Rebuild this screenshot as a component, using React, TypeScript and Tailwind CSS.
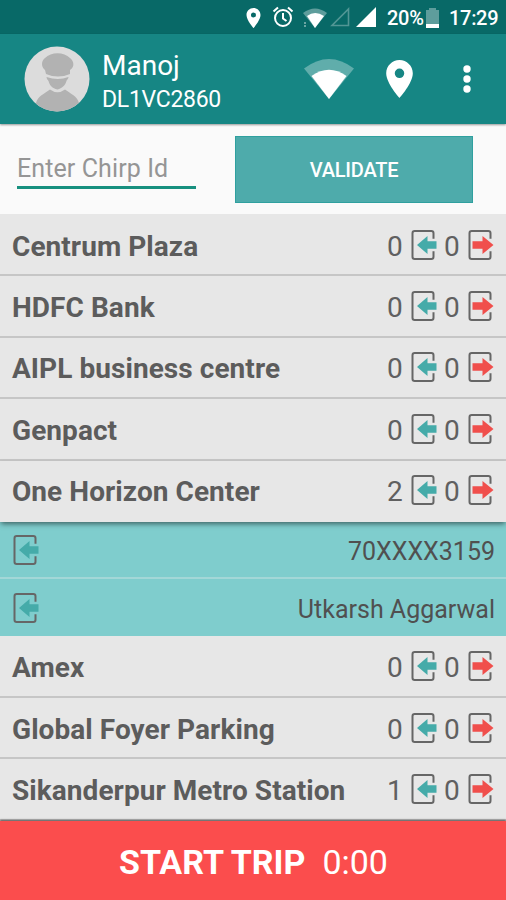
import React from "react";

type Stop = { name: string; boarding: number; leaving: number };

const stopsBefore: Stop[] = [
  { name: "Centrum Plaza", boarding: 0, leaving: 0 },
  { name: "HDFC Bank", boarding: 0, leaving: 0 },
  { name: "AIPL business centre", boarding: 0, leaving: 0 },
  { name: "Genpact", boarding: 0, leaving: 0 },
  { name: "One Horizon Center", boarding: 2, leaving: 0 },
];

const stopsAfter: Stop[] = [
  { name: "Amex", boarding: 0, leaving: 0 },
  { name: "Global Foyer Parking", boarding: 0, leaving: 0 },
  { name: "Sikanderpur Metro Station", boarding: 1, leaving: 0 },
];

const passengers = ["70XXXX3159", "Utkarsh Aggarwal"];

function DoorIcon({ out = false }: { out?: boolean }) {
  return (
    <svg width="26" height="30" viewBox="0 0 26 30" fill="none" className="shrink-0">
      <path
        d="M22.500 8.800V3.200Q22.500 1 20.300 1H3.700Q1.500 1 1.500 3.200V26.800Q1.500 29 3.700 29H20.300Q22.500 29 22.500 26.800V21.200"
        stroke="#666"
        strokeWidth="2"
      />
      {out ? (
        <path d="M4.500 11.200H14.500V6L25.500 15L14.500 24V18.800H4.500Z" fill="#f04f4c" />
      ) : (
        <path d="M25.500 11.200H16.500V6L6 15L16.500 24V18.800H25.500Z" fill="#45aba9" />
      )}
    </svg>
  );
}

function Pin({ className }: { className: string }) {
  return (
    <svg viewBox="5 2 14 20" className={className}>
      <path
        fill="#fff"
        fillRule="evenodd"
        d="M12 2C8.13 2 5 5.13 5 9c0 5.25 7 13 7 13s7-7.75 7-13c0-3.87-3.13-7-7-7zm0 9.5a2.5 2.5 0 110-5 2.5 2.5 0 010 5z"
      />
    </svg>
  );
}

function Wifi({ className }: { className: string }) {
  return (
    <svg viewBox="0 0 50 40" className={className}>
      <path d="M0 9.5Q25-9.5 50 9.5L25 40Z" fill="#fff" fillOpacity=".32" />
      <path d="M7.5 17Q25 4.5 42.5 17L25 40Z" fill="#fff" />
    </svg>
  );
}

function StopRow({ stop, open = false }: { stop: Stop; open?: boolean }) {
  return (
    <div
      className={
        "flex h-[61.4px] shrink-0 items-center border-b-2 bg-[#e7e7e7] pl-3 pr-3 pt-1 " +
        (open
          ? "relative z-10 border-[#e7e7e7] shadow-[0_3px_5px_-1px_rgba(0,0,0,0.5)]"
          : "border-[#c6c6c6]")
      }
    >
      <span className="grow whitespace-nowrap text-[28px] font-bold leading-none tracking-[0.06px] text-[#5c5c5c]">
        {stop.name}
      </span>
      <span className="w-4 text-[28px] leading-none">{stop.boarding}</span>
      <span className="ml-2 -mt-1 flex"><DoorIcon /></span>
      <span className="ml-[7px] w-4 text-[28px] leading-none">{stop.leaving}</span>
      <span className="ml-2 -mt-1 flex"><DoorIcon out /></span>
    </div>
  );
}

export default function App() {
  return (
    <div className="flex h-[900px] w-[506px] flex-col overflow-hidden bg-[#fafafa] font-[Roboto,sans-serif] text-[#606060]">
      <div className="flex h-[34px] shrink-0 items-center bg-[#086967] pl-[246px] text-[20px] font-medium leading-none text-white">
        <Pin className="mt-px h-5 w-[15px]" />
        <svg viewBox="0 0 22 22" className="ml-[11px] h-[22px] w-[22px]" fill="none" stroke="#fff" strokeWidth="2">
          <circle cx="11" cy="12" r="8" />
          <path d="M11 7V12.5L14.5 15M1.5 5.5L6 1.5M20.5 5.5L16 1.5" />
        </svg>
        <svg viewBox="0 0 24 20" className="ml-[9px] mt-px h-5 w-6">
          <path d="M0 5Q12-4 24 5L12 20Z" fill="#fff" fillOpacity=".35" />
          <path d="M4 8Q12 2 21 8L12 20Z" fill="#fff" />
          <path d="M1 14H3V16H1ZM1 17H3V19H1Z" fill="#fff" fillOpacity=".4" />
        </svg>
        <svg viewBox="0 0 20 20" className="ml-[3px] h-5 w-5">
          <path d="M2 18.5H18.5V2Z" fill="none" stroke="#fff" strokeOpacity=".3" strokeWidth="1.6" />
        </svg>
        <svg viewBox="0 0 20 20" className="ml-[6px] h-5 w-5">
          <path d="M0 20H20V0Z" fill="#fff" />
        </svg>
        <span className="ml-[11px] w-[39px] whitespace-nowrap pt-0.5 tracking-[-0.3px]">20%</span>
        <svg viewBox="0 0 13 20" className="mt-px h-5 w-[13px]">
          <path d="M3 0H10V2H13V20H0V2H3Z" fill="#fff" fillOpacity=".35" />
          <path d="M0 16H13V20H0Z" fill="#fff" />
        </svg>
        <span className="ml-[10px] pt-0.5 tracking-[-0.3px]">17:29</span>
      </div>

      <header className="relative z-10 flex h-[90px] shrink-0 items-center bg-[#168684] pl-6 text-white shadow-[0_1px_2px_rgba(0,0,0,0.4)]">
        <svg viewBox="0 0 66 66" className="h-[66px] w-[66px] shrink-0">
          <defs>
            <clipPath id="avatar"><circle cx="33" cy="33" r="32.5" /></clipPath>
          </defs>
          <circle cx="33" cy="33" r="32.5" fill="#dcdcdc" />
          <g clipPath="url(#avatar)" fill="#b2b2b2">
            <path d="M21 24C17 21 17 15 21 12C27 5.500 40 5.500 46 12C50 15 51 21 46 24V28Q34 33 22 28Z" />
            <path d="M22.500 31Q34 35 44.500 31C44 34 43 33 42.500 35C41 40 38 42 33.500 43.500C28 42 26 40 24.500 35C23.500 33 23 34 22.500 31Z" />
            <path d="M12 66V57C14 50 20 48 26 43.500Q33.500 49 41 43.500C47 48 53 50 55 57V66Z" />
          </g>
        </svg>
        <div className="ml-3 flex w-[190px] flex-col pt-[6px]">
          <span className="text-[28px] leading-[34px]">Manoj</span>
          <span className="text-[23px] leading-[33px] tracking-[-0.3px]">DL1VC2860</span>
        </div>
        <Wifi className="ml-[12px] h-10 w-[50px]" />
        <Pin className="ml-[32px] h-[38px] w-[27px]" />
        <svg viewBox="0 0 8 28" className="ml-[50px] h-7 w-2" fill="#fff">
          <circle cx="4" cy="4" r="3.7" />
          <circle cx="4" cy="14" r="3.7" />
          <circle cx="4" cy="24" r="3.7" />
        </svg>
      </header>

      <div className="flex h-[90px] shrink-0 items-center pl-[17px]">
        <div className="h-[39px] w-[179px] border-b-[3px] border-[#17907f] text-[25px] leading-[38px] tracking-[0.1px] text-[#959595]">
          Enter Chirp Id
        </div>
        <button className="ml-[39px] h-[67px] w-[238px] border border-[#2fa09f] bg-[#4eabab] pt-px text-[20px] font-medium tracking-[-0.2px] text-white">
          VALIDATE
        </button>
      </div>

      <div className="flex shrink-0 flex-col bg-[#e7e7e7] pt-px">
        {stopsBefore.map((s, i) => (
          <StopRow key={s.name} stop={s} open={i === 4} />
        ))}
        {passengers.map((p, i) => (
          <div
            key={p}
            className={
              "flex shrink-0 items-center justify-between bg-[#7fcdcd] pl-[13px] pr-[11px] text-[#505050] " +
              (i === 0 ? "h-[57.500px] border-b-2 border-[#a3d7d7]" : "h-[57px]")
            }
          >
            <DoorIcon />
            <span className="pt-[3px] text-[25px] leading-none">{p}</span>
          </div>
        ))}
        {stopsAfter.map((s) => (
          <StopRow key={s.name} stop={s} />
        ))}
      </div>

      <footer className="relative z-10 flex grow items-center justify-center gap-[17px] bg-[#fb4d4d] pl-px pt-1 text-[34px] leading-none text-white shadow-[0_-1px_2px_rgba(0,0,0,0.6)]">
        <span className="font-bold">START TRIP</span>
        <span>0:00</span>
      </footer>
    </div>
  );
}
